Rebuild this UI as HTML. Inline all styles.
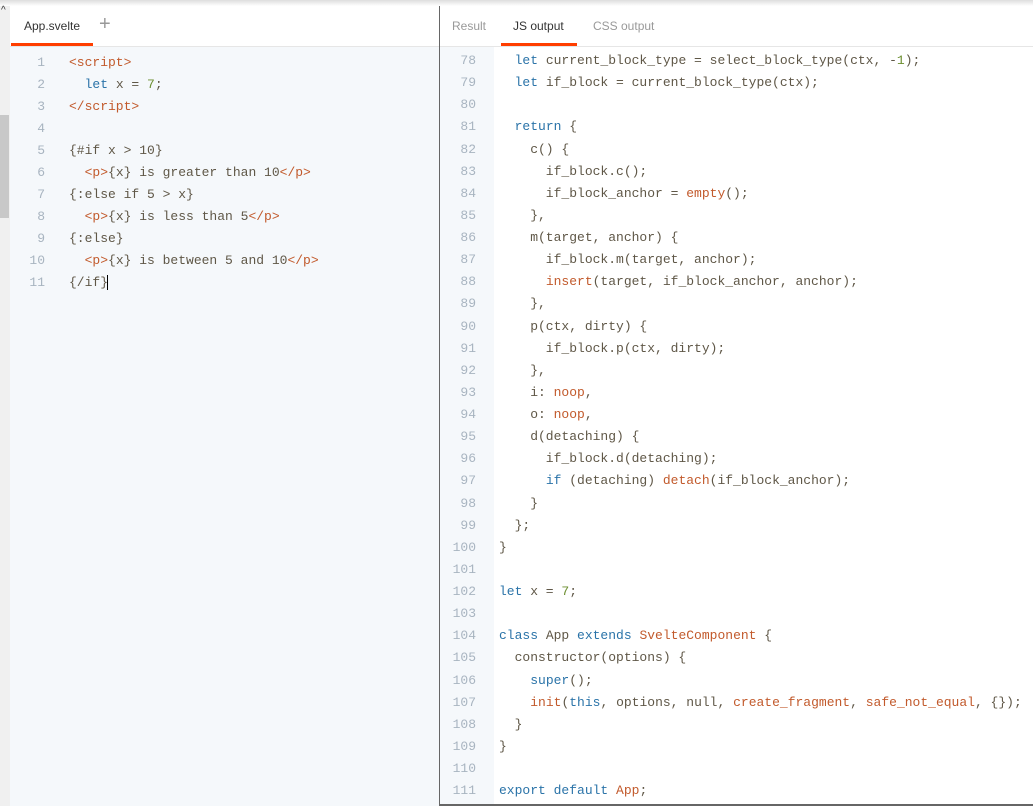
<!DOCTYPE html><html><head><style>
body{margin:0;width:1033px;height:806px;overflow:hidden;background:#fff;font-family:"Liberation Sans",sans-serif;position:relative}
.sh{position:absolute;left:0;top:0;width:1033px;height:6px;background:linear-gradient(#ddd,#fff)}
.lp{position:absolute;left:10px;top:6px;width:429px;height:800px;background:#f5f8fb;border-right:1px solid #666}
.sb{position:absolute;left:0;top:6px;width:10px;height:800px;background:#f0f0f0}
.th{position:absolute;left:0;top:115px;width:9px;height:103px;background:#c8c8c8}
.tabs{position:absolute;top:6px;height:40px;background:#fff;border-bottom:1px solid #e6e6e6}
.tab{position:absolute;top:13px;font-size:12px;color:#333}
.ul{position:absolute;height:3px;background:#ff3e00;top:37px}
.code{position:absolute;font-family:"Liberation Mono",monospace;font-size:13px;line-height:22px;white-space:pre;color:#5f5747}
.ln{position:absolute;font-family:"Liberation Mono",monospace;font-size:13px;line-height:22px;white-space:pre;color:#a8b4c0;text-align:right}
.k{color:#2a73a8}.t{color:#c25a2c}.n{color:#6b8e2f}.f{color:#c25a2c}
.rg{position:absolute;left:440px;top:47px;width:54px;height:757px;background:#f5f8fb}
.bb{position:absolute;left:440px;top:804px;width:593px;height:2px;background:#666}
.r{line-height:22.12px}
</style></head><body>
<div class="sh"></div>
<div class="sb"><div class="th" style="top:109px"></div></div>
<div style="position:absolute;left:1px;top:5px;font-size:10px;color:#333">^</div>
<div class="lp"></div>
<div class="tabs" style="left:10px;width:429px"></div>
<div class="tab" style="left:24px;top:19px">App.svelte</div>
<div style="position:absolute;left:99px;top:13px;font-size:20px;color:#999;font-weight:300">+</div>
<div class="ul" style="left:11px;width:82px;top:43px"></div>
<div class="ln" style="left:10px;top:52px;width:35px">1
2
3
4
5
6
7
8
9
10
11</div>
<div class="code" style="left:69px;top:52px"><span class="t">&lt;script&gt;</span>
  <span class="k">let</span> x = <span class="n">7</span>;
<span class="t">&lt;/script&gt;</span>

{#if x &gt; 10}
  <span class="t">&lt;p&gt;</span>{x} is greater than 10<span class="t">&lt;/p&gt;</span>
{:else if 5 &gt; x}
  <span class="t">&lt;p&gt;</span>{x} is less than 5<span class="t">&lt;/p&gt;</span>
{:else}
  <span class="t">&lt;p&gt;</span>{x} is between 5 and 10<span class="t">&lt;/p&gt;</span>
{/if}<span style="border-left:1px solid #000;margin-left:-1px"></span></div>
<div class="tabs" style="left:440px;width:593px"></div>
<div class="tab" style="left:452px;top:19px;color:#999">Result</div>
<div class="tab" style="left:513px;top:19px">JS output</div>
<div class="tab" style="left:593px;top:19px;color:#999">CSS output</div>
<div class="ul" style="left:501px;width:76px;top:43px"></div>
<div class="rg"></div>
<div class="ln r" style="left:440px;top:50px;width:36px">78
79
80
81
82
83
84
85
86
87
88
89
90
91
92
93
94
95
96
97
98
99
100
101
102
103
104
105
106
107
108
109
110
111</div>
<div class="code r" style="left:499px;top:50px">  <span class="k">let</span> current_block_type = select_block_type(ctx, -<span class="n">1</span>);
  <span class="k">let</span> if_block = current_block_type(ctx);

  <span class="k">return</span> {
    c() {
      if_block.c();
      if_block_anchor = <span class="f">empty</span>();
    },
    m(target, anchor) {
      if_block.m(target, anchor);
      <span class="f">insert</span>(target, if_block_anchor, anchor);
    },
    p(ctx, dirty) {
      if_block.p(ctx, dirty);
    },
    i: <span class="f">noop</span>,
    o: <span class="f">noop</span>,
    d(detaching) {
      if_block.d(detaching);
      <span class="k">if</span> (detaching) <span class="f">detach</span>(if_block_anchor);
    }
  };
}

<span class="k">let</span> x = <span class="n">7</span>;

<span class="k">class</span> App <span class="k">extends</span> <span class="f">SvelteComponent</span> {
  constructor(options) {
    <span class="k">super</span>();
    <span class="f">init</span>(<span class="k">this</span>, options, null, <span class="f">create_fragment</span>, <span class="f">safe_not_equal</span>, {});
  }
}

<span class="k">export default</span> <span class="f">App</span>;</div>
<div class="bb"></div>
</body></html>
